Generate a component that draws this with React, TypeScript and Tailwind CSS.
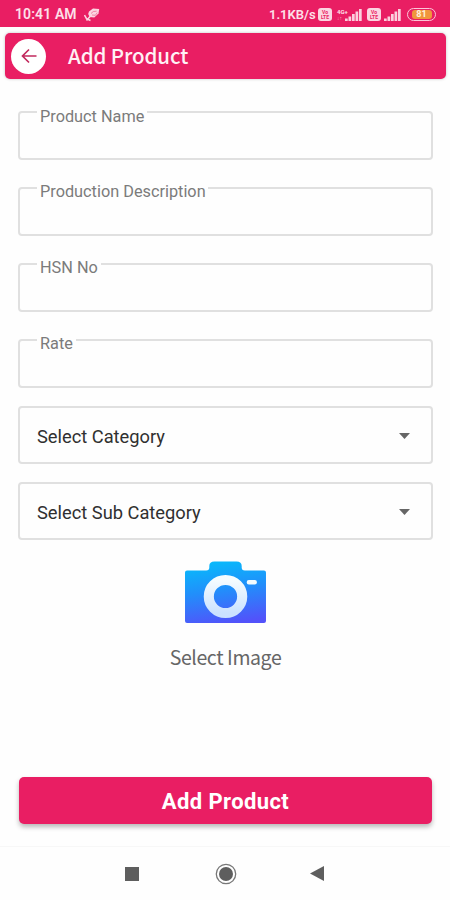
import * as React from "react";
import { clsx } from "clsx";

const textFields = [
  { id: "name", label: "Product Name", legend: "w-[110px]", shift: "translate-y-[5px]", gap: "" },
  { id: "description", label: "Production Description", legend: "w-[171px]", shift: "translate-y-[4px]", gap: "mt-[27px]" },
  { id: "hsn", label: "HSN No", legend: "w-[64px]", shift: "translate-y-[4px]", gap: "mt-[27px]" },
  { id: "rate", label: "Rate", legend: "w-[39px]", shift: "translate-y-[4px]", gap: "mt-[27px]" },
];

const selectFields = [
  { id: "category", label: "Select Category" },
  { id: "subCategory", label: "Select Sub Category" },
];

function SignalBars() {
  return (
    <svg width="17" height="12" viewBox="0 0 17 12" fill="#fbd0de">
      <rect x="0" y="9.5" width="2.7" height="2.5" />
      <rect x="3.5" y="7.5" width="2.7" height="4.5" />
      <rect x="7" y="5" width="2.7" height="7" />
      <rect x="10.5" y="2.5" width="2.7" height="9.5" />
      <rect x="14" y="0" width="2.7" height="12" />
    </svg>
  );
}

function VolteBadge() {
  return (
    <span className="flex h-[13px] w-[14px] flex-col items-center justify-center rounded-[3px] bg-[#fbd5e1] text-[5px] leading-[5px] font-bold text-[#e91e63]">
      <span>Vo</span>
      <span>LTE</span>
    </span>
  );
}

function StatusBar() {
  return (
    <div className="flex h-[27px] items-center bg-[#e91e63] pt-[2px] pr-[14px] pl-[15px] text-[#fde0e9]">
      <span className="w-[63px] text-[14px] font-semibold tracking-[0.1px] whitespace-nowrap">
        10:41 AM
      </span>
      <svg className="ml-[6px]" width="16" height="14" viewBox="0 0 16 14">
        <path d="M5 3.5 9 .5l6.2.4-.7 4.6-4.2 4-4.7-.4-1.4-3z" fill="#fbd5e1" />
        <path d="m7 5.5 2.3-2 3.3-.3M8 7l3.4.3 1.8-2.6" fill="none" stroke="#ed5c8b" strokeWidth="0.7" />
        <path d="M6.5 8 2.5 12.5M.5 7l2 3.7 4 1.8" fill="none" stroke="#fbd5e1" strokeWidth="1.5" />
      </svg>

      <div className="ml-auto flex items-center">
        <span className="w-[49px] text-[13px] font-semibold whitespace-nowrap">1.1KB/s</span>
        <VolteBadge />
        <span className="ml-[5px] flex h-[12px] w-[8px] flex-col text-[6px] leading-[6px] font-bold">
          <span>4G+</span>
          <span className="text-[5px] opacity-60">↓↑</span>
        </span>
        <SignalBars />
        <span className="ml-[5px] flex">
          <VolteBadge />
        </span>
        <span className="ml-[3px] flex">
          <SignalBars />
        </span>
        <span className="ml-[6px] flex h-[13px] w-[29px] items-center justify-center rounded-full border-[1.5px] border-[#fbc6d7]">
          <span className="flex h-[9px] w-[20px] items-center justify-center rounded-[3px] bg-[#f0963c] text-[9px] leading-[9px] font-bold text-[#fff0dc]">
            81
          </span>
        </span>
      </div>
    </div>
  );
}

function Header() {
  return (
    <header className="mt-[6px] mr-[4px] ml-[5px] flex h-[46px] items-center rounded-[5px] bg-[#e91e63] pl-[6px] shadow-[0_0_3px_rgba(0,0,0,0.25)]">
      <button className="flex h-[35px] w-[35px] items-center justify-center rounded-full bg-white">
        <svg width="16" height="16" viewBox="0 0 16 16" fill="none" stroke="#c22a5e" strokeWidth="1.7">
          <path d="M15.5 8H1.5M8 1.5 1.5 8 8 14.5" />
        </svg>
      </button>
      <h1 className="mb-[2px] ml-[22px] font-['Noto_Sans_CJK_SC',sans-serif] text-[20.5px] leading-[30px] font-medium tracking-[-0.1px] text-[#fff0f5]">
        Add Product
      </h1>
    </header>
  );
}

export default function App() {
  return (
    <div className="flex h-[900px] w-[450px] flex-col overflow-hidden bg-[#fefefe] font-[Roboto,sans-serif]">
      <StatusBar />
      <Header />

      <main className="flex flex-1 flex-col pt-[32px] pr-[17px] pl-[18px]">
        {textFields.map((field) => (
          <fieldset
            key={field.id}
            className={clsx(
              "h-[49px] rounded-[4px] border-2 border-[#e0e0e0] pl-[17px]",
              field.gap
            )}
          >
            <legend className={clsx("h-[2px] pl-[3px] text-[16.3px] leading-[2px]", field.legend)}>
              <span className={clsx("inline-block whitespace-nowrap text-[#7b7b7b]", field.shift)}>
                {field.label}
              </span>
            </legend>
          </fieldset>
        ))}

        <div className="mt-[18px] flex flex-col gap-[18px]">
          {selectFields.map((field) => (
            <button
              key={field.id}
              className="flex h-[58px] items-center justify-between rounded-[4px] border-2 border-[#e0e0e0] pr-[21px] pl-[17px] text-[18.3px] text-[#303030]"
            >
              <span className="pt-[4px]">{field.label}</span>
              <svg className="mt-[2px]" width="11" height="6" viewBox="0 0 11 6" fill="#666">
                <path d="M0 0h11L5.500 6z" />
              </svg>
            </button>
          ))}
        </div>

        <button className="mt-[21px] flex flex-col items-center">
          <svg width="83" height="63" viewBox="0 0 82 63" preserveAspectRatio="none">
            <defs>
              <linearGradient id="camera" x1="0.4" y1="0" x2="0.6" y2="1">
                <stop offset="0" stopColor="#08b9fb" />
                <stop offset="0.45" stopColor="#218ffb" />
                <stop offset="1" stopColor="#5252fa" />
              </linearGradient>
              <linearGradient id="lens" x1="0" y1="0" x2="0" y2="1">
                <stop offset="0" stopColor="#f5fcff" />
                <stop offset="1" stopColor="#cbe2ff" />
              </linearGradient>
            </defs>
            <path
              d="M3 9.500H22Q25 9.500 25 6.500V5Q25 0.500 30 0.500H52Q57 0.500 57 5V6.500Q57 9.500 60 9.500H79Q81 9.500 81 11.500V60Q81 62 79 62H3Q1 62 1 60V11.500Q1 9.500 3 9.500Z"
              fill="url(#camera)"
            />
            <circle cx="41" cy="35.500" r="16.500" fill="none" stroke="url(#lens)" strokeWidth="10" />
            <rect x="62" y="19" width="10" height="4.500" rx="2" fill="#f2fbff" />
          </svg>
          <span className="mt-[18px] font-['Noto_Sans_CJK_SC',sans-serif] text-[19.5px] leading-[30px] tracking-[-0.4px] text-[#666]">
            Select Image
          </span>
        </button>

        <button className="mt-auto mr-px mb-[22px] ml-px h-[47px] shrink-0 rounded-[5px] bg-[#e91e63] pt-px text-[22px] font-bold tracking-[0.4px] text-white shadow-[0_3px_5px_rgba(0,0,0,0.28)]">
          Add Product
        </button>
      </main>

      <nav className="flex h-[54px] items-center border-t border-[#f7f7f7] pl-[125px]">
        <svg width="14" height="14" viewBox="0 0 14 14">
          <rect width="14" height="14" fill="#5e5e5e" />
        </svg>
        <svg className="ml-[76px]" width="22" height="22" viewBox="0 0 22 22">
          <circle cx="11" cy="11" r="9.700" fill="none" stroke="#777" strokeWidth="1.300" />
          <circle cx="11" cy="11" r="7" fill="#5e5e5e" />
        </svg>
        <svg className="ml-[73px]" width="14" height="15" viewBox="0 0 14 15">
          <path d="M14 0v15L0 7.500z" fill="#5e5e5e" />
        </svg>
      </nav>
    </div>
  );
}
